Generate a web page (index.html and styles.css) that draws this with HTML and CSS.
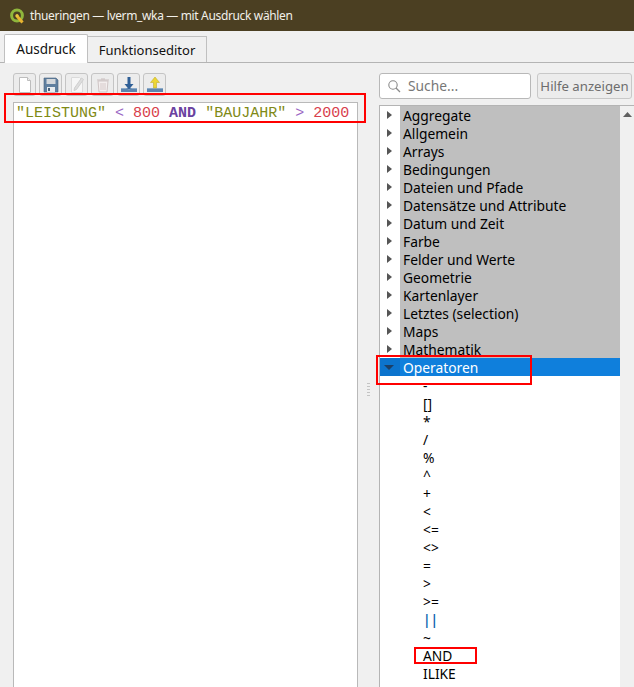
FILE: index.html
```html
<!DOCTYPE html>
<html lang="de">
<head>
<meta charset="utf-8">
<title>thueringen — lverm_wka — mit Ausdruck wählen</title>
<link rel="stylesheet" href="styles.css">
</head>
<body>
<header class="titlebar">
  <svg class="logo" width="16" height="16" viewBox="0 0 16 16"><circle cx="8" cy="7.500" r="5.400" fill="none" stroke="#8fb63c" stroke-width="3"/><path d="M7.500 7.500 L13.500 14.500" stroke="#e8b530" stroke-width="3" fill="none"/><circle cx="8" cy="7.500" r="1.600" fill="#e8c840"/></svg>
  <span>thueringen — lverm_wka — mit Ausdruck wählen</span>
</header>
<nav class="tabs">
  <div class="tab active">Ausdruck</div>
  <div class="tab">Funktionseditor</div>
</nav>
<main class="pane">
  <section class="left">
    <div class="toolbar">
      <button class="tool"><svg width="16" height="18" viewBox="0 0 16 18"><path d="M2.500 1.500h8l3 3v12h-11z" fill="#fff" stroke="#bdbdbd"/><path d="M10.500 1.500v3h3" fill="#eee" stroke="#bdbdbd"/></svg></button>
      <button class="tool"><svg width="16" height="16" viewBox="0 0 16 16"><path d="M1 1h12l2 2v12H1z" fill="#5f7f9f" stroke="#49627c" stroke-width=".6"/><rect x="3.500" y="2" width="9" height="5" fill="#d4d8dc"/><rect x="4" y="10" width="8" height="5" fill="#e8ecef"/><rect x="5" y="11" width="2" height="3" fill="#49627c"/></svg></button>
      <button class="tool"><svg width="16" height="18" viewBox="0 0 16 18"><path d="M2.500 1.500h8l3 3v12h-11z" fill="#f6f6f6" stroke="#dadada"/><path d="M12.500 2l2 1.500-7 10-2.500 1 .5-2.500z" fill="#dedede" stroke="#cfcfcf"/></svg></button>
      <button class="tool"><svg width="16" height="16" viewBox="0 0 16 16"><path d="M3 4h10l-1 11H4z" fill="#f3eeee" stroke="#cfc5c5"/><path d="M2 3h12M6 2h4" stroke="#c9bebe" fill="none"/><path d="M6 6v7M8 6v7M10 6v7" stroke="#d6caca"/></svg></button>
      <button class="tool"><svg width="18" height="18" viewBox="0 0 18 18"><path d="M1 12h16v4H1z" fill="#5d84ad"/><path d="M1 12h5l3 2 3-2h5v1H1z" fill="#8aa9c8"/><path d="M7.500 1h3v7h3L9 13.500 4.500 8h3z" fill="#2f5f96"/></svg></button>
      <button class="tool"><svg width="18" height="18" viewBox="0 0 18 18"><path d="M1 12h16v4H1z" fill="#5d84ad"/><path d="M1 12h16v1H1z" fill="#8aa9c8"/><path d="M9 1l4.500 5.500h-3V12h-3V6.500h-3z" fill="#ecd634" stroke="#b9a51e" stroke-width=".5"/></svg></button>
    </div>
    <div class="editor">
      <div class="code"><span class="s">"LEISTUNG"</span> <span class="o">&lt;</span> <span class="n">800</span> <b class="k">AND</b> <span class="s">"BAUJAHR"</span> <span class="o">&gt;</span> <span class="n">2000</span></div>
    </div>
  </section>
  <div class="splitter"><i></i><i></i><i></i><i></i><i></i></div>
  <section class="right">
    <div class="searchrow">
      <div class="search"><svg width="14" height="14" viewBox="0 0 14 14"><circle cx="6" cy="6" r="4.200" fill="none" stroke="#8a8a8a" stroke-width="1.100"/><path d="M9 9l4 4" stroke="#8a8a8a" stroke-width="1.200"/></svg><span>Suche...</span></div>
      <button class="help">Hilfe anzeigen</button>
    </div>
    <div class="treewrap">
      <ul class="tree">
        <li class="group"><i class="tri"></i><span>Aggregate</span></li>
        <li class="group"><i class="tri"></i><span>Allgemein</span></li>
        <li class="group"><i class="tri"></i><span>Arrays</span></li>
        <li class="group"><i class="tri"></i><span>Bedingungen</span></li>
        <li class="group"><i class="tri"></i><span>Dateien und Pfade</span></li>
        <li class="group"><i class="tri"></i><span>Datensätze und Attribute</span></li>
        <li class="group"><i class="tri"></i><span>Datum und Zeit</span></li>
        <li class="group"><i class="tri"></i><span>Farbe</span></li>
        <li class="group"><i class="tri"></i><span>Felder und Werte</span></li>
        <li class="group"><i class="tri"></i><span>Geometrie</span></li>
        <li class="group"><i class="tri"></i><span>Kartenlayer</span></li>
        <li class="group"><i class="tri"></i><span>Letztes (selection)</span></li>
        <li class="group"><i class="tri"></i><span>Maps</span></li>
        <li class="group"><i class="tri"></i><span>Mathematik</span></li>
        <li class="group selected"><i class="tri open"></i><span>Operatoren</span></li>
        <li class="leaf">-</li>
        <li class="leaf">[]</li>
        <li class="leaf">*</li>
        <li class="leaf">/</li>
        <li class="leaf">%</li>
        <li class="leaf">^</li>
        <li class="leaf">+</li>
        <li class="leaf">&lt;</li>
        <li class="leaf">&lt;=</li>
        <li class="leaf">&lt;&gt;</li>
        <li class="leaf">=</li>
        <li class="leaf">&gt;</li>
        <li class="leaf">&gt;=</li>
        <li class="leaf pipe">||</li>
        <li class="leaf">~</li>
        <li class="leaf">AND</li>
        <li class="leaf">ILIKE</li>
        <li class="leaf">IN</li>
      </ul>
      <div class="scrollbar"><svg width="9" height="5" viewBox="0 0 9 5"><path d="M4.500 0L9 5H0z" fill="#606060"/></svg></div>
    </div>
  </section>
</main>
<div class="mark mark-code"></div>
<div class="mark mark-op"></div>
<div class="mark mark-and"></div>
</body>
</html>
```
FILE: styles.css
```css
* { box-sizing: border-box; }
html, body { margin: 0; padding: 0; }
body {
  width: 634px; height: 687px; overflow: hidden; position: relative;
  background: #f0f0f0; color: #000;
  font: 13.8px/18px "Noto Sans", sans-serif;
}
.titlebar {
  height: 31px; background: #4b3f22; color: #f2f0ea;
  display: flex; align-items: center; gap: 5px; padding-left: 9px;
  font-size: 12px; letter-spacing: -0.35px;
}
.logo { flex: none; }
.tabs {
  height: 32px; padding: 3px 0 0 4px; display: flex; align-items: flex-end;
  border-bottom: 1px solid #b4b4b4; background: #f0f0f0; font-size: 13px;
}
.tab {
  height: 26px; width: 120px; text-align: center; line-height: 26px; background: #f0f0f0;
  border: 1px solid #c0c0c0; border-bottom: 0; margin-left: -1px; color: #111;
}
.tab:first-child { margin-left: 0; }
.tab.active {
  height: 29px; width: 84px; background: #fff; border-radius: 2px 2px 0 0;
  margin-bottom: -1px; line-height: 28px; font-size: 13.500px;
}
.pane { display: flex; height: 624px; }
.left { width: 358px; padding: 10px 0 0 13px; flex: none; }
.toolbar { display: flex; gap: 3px; height: 29px; align-items: flex-start; }
.tool {
  width: 23px; height: 23px; padding: 0; border: 1px solid #c4c4c4; border-radius: 3px;
  background: #ececec; display: flex; align-items: center; justify-content: center;
}
.editor {
  height: 591px; background: #fff; border: 1px solid #b9b9b9; border-bottom: 0;
  padding: 2px 0 0 2px;
}
.code { font: 15px/18px "Liberation Mono", monospace; white-space: pre; }
.code .s { color: #7f8a16; }
.code .o { color: #9a66c4; }
.code .n { color: #d8404c; }
.code .k { color: #6a42a0; }
.splitter {
  width: 21px; flex: none; display: flex; flex-direction: column; gap: 2px;
  align-items: center; justify-content: flex-start; padding-top: 320px;
}
.splitter i { width: 3px; height: 1px; background: #c4c4c4; display: block; }
.right { flex: none; width: 255px; padding-top: 10px; }
.searchrow { display: flex; gap: 6px; height: 32px; align-items: flex-start; }
.search {
  width: 152px; height: 26px; background: #fff; border: 1px solid #b8b8b8; border-radius: 3px;
  display: flex; align-items: center; gap: 7px; padding-left: 7px; color: #777;
}
.help {
  width: 95px; height: 26px; padding: 0; font: inherit; font-size: 13.200px; color: #6d6d6d;
  background: #ececec; border: 1px solid #c8c8c8; border-radius: 3px; white-space: nowrap;
}
.treewrap { display: flex; height: 582px; overflow: hidden; border-left: 1px solid #b4b4b4; border-top: 1px solid #b4b4b4; }
.tree { list-style: none; margin: 0; padding: 0; width: 240px; background: #fff; flex: none; }
.tree li { height: 18px; line-height: 19px; white-space: nowrap; }
.group { display: flex; align-items: center; background: #bfbfbf; }
.group span { flex: 1; padding-left: 3px; height: 18px; }
.tri {
  width: 20px; height: 18px; flex: none; display: flex; align-items: center; justify-content: center;
  background: #fff;
}
.tri::before {
  content: ""; display: block; margin-right: 2px;
  border-left: 5px solid #555; border-top: 4px solid transparent; border-bottom: 4px solid transparent;
}
.tri.open::before {
  border-top: 5px solid #1c3f66; border-left: 5px solid transparent; border-right: 5px solid transparent; border-bottom: 0;
}
.group.selected { background: #0f7fdc; color: #fff; }
.group.selected .tri { background: #0c74cd; }
.leaf { padding-left: 43px; }
.pipe { color: #0b5fae; font-weight: 600; }
.scrollbar { width: 14px; flex: none; background: #f0f0f0; display: flex; justify-content: center; padding-top: 6px; }
.scrollbar svg { display: block; }
.mark { position: absolute; border: 2px solid #f00; pointer-events: none; }
.mark-code { left: 4px; top: 93px; width: 362px; height: 30px; }
.mark-op { left: 376px; top: 355px; width: 156px; height: 30px; }
.mark-and { left: 414px; top: 647px; width: 63px; height: 17px; }
```
